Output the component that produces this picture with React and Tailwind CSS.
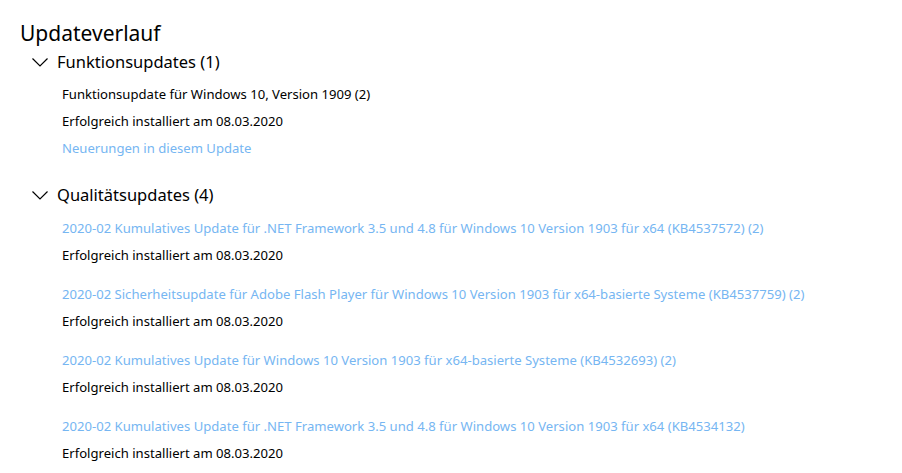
import React from 'react';

const font = { fontFamily: '"Segoe UI", "Noto Sans", "Open Sans", sans-serif' };

const qualityUpdates = [
  '2020-02 Kumulatives Update für .NET Framework 3.5 und 4.8 für Windows 10 Version 1903 für x64 (KB4537572) (2)',
  '2020-02 Sicherheitsupdate für Adobe Flash Player für Windows 10 Version 1903 für x64-basierte Systeme (KB4537759) (2)',
  '2020-02 Kumulatives Update für Windows 10 Version 1903 für x64-basierte Systeme (KB4532693) (2)',
  '2020-02 Kumulatives Update für .NET Framework 3.5 und 4.8 für Windows 10 Version 1903 für x64 (KB4534132)',
];

function Chevron() {
  return (
    <svg width="16" height="9" viewBox="0 0 16 9" className="shrink-0">
      <path d="M0.5 0.5 L8 8 L15.5 0.5" fill="none" stroke="#000" strokeWidth="1.2" />
    </svg>
  );
}

function SectionHeader({ title }) {
  return (
    <div className="flex items-center h-[24px] pl-[32px]">
      <Chevron />
      <span className="ml-[9px] text-[16.5px] text-black leading-none">{title}</span>
    </div>
  );
}

export default function App() {
  return (
    <div className="w-[902px] h-[473px] bg-white overflow-hidden" style={font}>
      <div className="pt-[20px] pl-[20px]">
        <h1 className="text-[21px] leading-[26px] text-black">Updateverlauf</h1>
      </div>

      <div className="mt-[4px]">
        <SectionHeader title="Funktionsupdates (1)" />
        <div className="pl-[62px] mt-[7px] flex flex-col text-[13.1px] leading-[27px]">
          <span className="text-black">Funktionsupdate für Windows 10, Version 1909 (2)</span>
          <span className="text-black">Erfolgreich installiert am 08.03.2020</span>
          <span className="text-[#76b6f2]">Neuerungen in diesem Update</span>
        </div>
      </div>

      <div className="mt-[21px]">
        <SectionHeader title="Qualitätsupdates (4)" />
        <div className="pl-[62px] mt-[8px] flex flex-col gap-[12px] text-[13.1px] leading-[27px]">
          {qualityUpdates.map((u) => (
            <div key={u} className="flex flex-col">
              <span className="text-[#76b6f2] whitespace-nowrap">{u}</span>
              <span className="text-black">Erfolgreich installiert am 08.03.2020</span>
            </div>
          ))}
        </div>
      </div>
    </div>
  );
}
